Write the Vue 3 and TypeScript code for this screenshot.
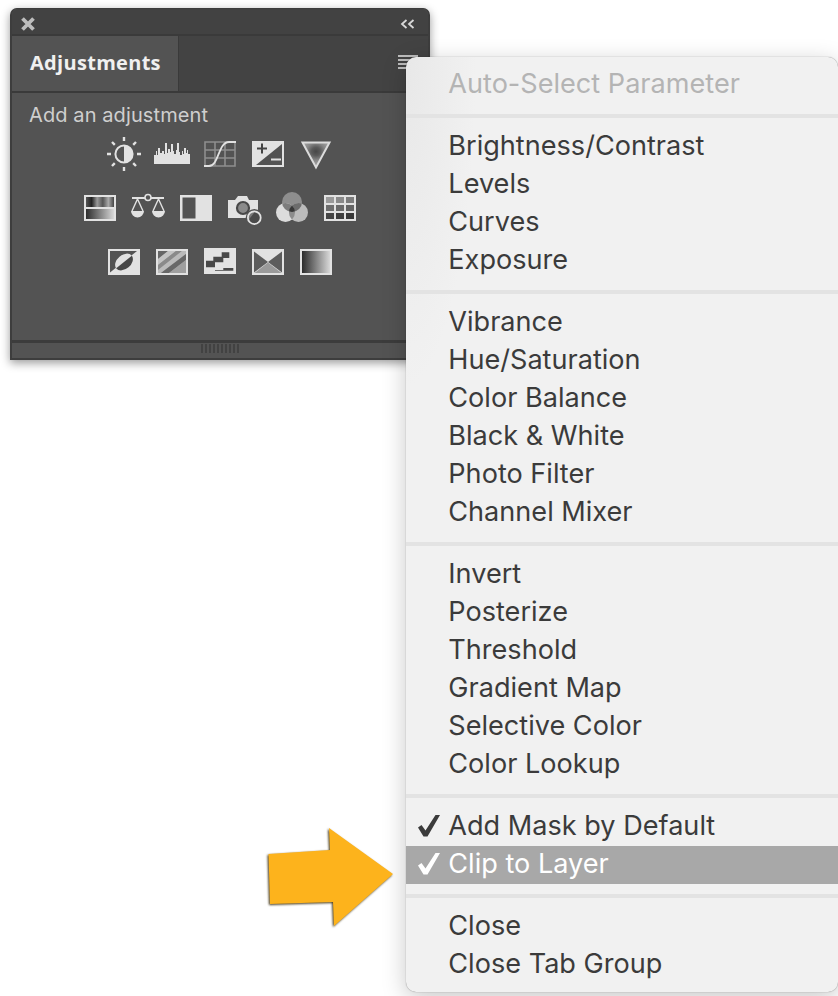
<template>
  <div class="page">
    <section class="panel">
      <header class="title-bar">
        <svg class="close-x" width="14" height="14" viewBox="0 0 14 14">
          <path d="M1.500 1.500l11 11M12.500 1.500l-11 11" stroke="#bdbdbd" stroke-width="3.800" />
        </svg>
        <svg class="collapse" width="16" height="12" viewBox="0 0 16 12">
          <path d="M6.500 2L2 6l4.500 4M13.500 2L9 6l4.500 4" fill="none" stroke="#d8d8d8" stroke-width="1.800" />
        </svg>
      </header>
      <div class="tab-row">
        <div class="tab">Adjustments</div>
        <div class="tab-menu"><i></i><i></i><i></i><i></i></div>
      </div>
      <div class="body">
        <p class="hint">Add an adjustment</p>
        <div class="icon-rows">
          <div class="icon-row">
            <!-- brightness -->
            <svg viewBox="0 0 40 40">
              <circle cx="20" cy="20" r="8.600" fill="#535353" stroke="#e2e2e2" stroke-width="2" />
              <path d="M20 11.400a8.600 8.600 0 0 1 0 17.200z" fill="#e2e2e2" />
              <path d="M20 3v4M20 33v4M3 20h4M33 20h4M8 8l2.800 2.800M32 8l-2.800 2.800M8 32l2.800-2.800M32 32l-2.800-2.800" stroke="#e2e2e2" stroke-width="2.400" />
            </svg>
            <!-- levels -->
            <svg viewBox="0 0 40 40">
              <path d="M2 30V21H4V17H5V21H6V14H8V19H10V17H12V20H13V9H15V19H16V15H18V18H19V10H21V17H22V20H24V16H25V9H27V18H28V21H30V17H31V20H32V14H34V19H35V16H36V20H38V30z" fill="#e2e2e2" />
            </svg>
            <!-- curves -->
            <svg viewBox="0 0 40 40">
              <path d="M5 8h30v24H5zM15 8v24M25 8v24M5 16h30M5 24h30" fill="none" stroke="#8e8e8e" stroke-width="1.600" />
              <path d="M4 32h5c10 0 9-24 20-24h7" fill="none" stroke="#e2e2e2" stroke-width="1.800" />
            </svg>
            <!-- exposure -->
            <svg viewBox="0 0 40 40">
              <rect x="4" y="7" width="32" height="26" fill="#e2e2e2" />
              <path d="M34 10v21H8z" fill="#535353" />
              <path d="M9 14.500h10M14 9.500v10" stroke="#444" stroke-width="2" />
              <path d="M23 25.500h10" stroke="#e2e2e2" stroke-width="2" />
            </svg>
            <!-- vibrance -->
            <svg viewBox="0 0 40 40">
              <defs>
                <radialGradient id="vib" cx="50%" cy="36%" r="48%">
                  <stop offset="0" stop-color="#474747" />
                  <stop offset=".35" stop-color="#5a5a5a" />
                  <stop offset=".7" stop-color="#858585" />
                  <stop offset="1" stop-color="#9a9a9a" />
                </radialGradient>
              </defs>
              <path d="M6.500 8.500h27L20 33.500z" fill="url(#vib)" stroke="#dcdcdc" stroke-width="2" />
            </svg>
          </div>
          <div class="icon-row">
            <!-- hue/saturation -->
            <svg viewBox="0 0 40 40">
              <defs>
                <linearGradient id="hueTop">
                  <stop offset="0" stop-color="#555" /><stop offset=".2" stop-color="#222" />
                  <stop offset=".4" stop-color="#999" /><stop offset=".6" stop-color="#555" />
                  <stop offset=".8" stop-color="#aaa" /><stop offset="1" stop-color="#444" />
                </linearGradient>
                <linearGradient id="grayBar">
                  <stop offset="0" stop-color="#2c2c2c" /><stop offset="1" stop-color="#d8d8d8" />
                </linearGradient>
              </defs>
              <rect x="4" y="7" width="32" height="26" fill="#e2e2e2" />
              <rect x="6" y="9" width="28" height="10" fill="url(#hueTop)" />
              <rect x="6" y="21" width="28" height="10" fill="url(#grayBar)" />
            </svg>
            <!-- color balance -->
            <svg viewBox="0 0 40 40">
              <path d="M4 10h13M23 10h13" stroke="#e2e2e2" stroke-width="1.800" />
              <circle cx="20" cy="9.500" r="3" fill="none" stroke="#e2e2e2" stroke-width="1.600" />
              <path d="M9.500 11L4 23M9.500 11l5.500 12M30.500 11L25 23M30.500 11L36 23" fill="none" stroke="#e2e2e2" stroke-width="1.400" />
              <path d="M3 23h13a6.500 6.500 0 0 1-13 0zM24 23h13a6.500 6.500 0 0 1-13 0z" fill="#e2e2e2" />
            </svg>
            <!-- black & white -->
            <svg viewBox="0 0 40 40">
              <rect x="4" y="7" width="32" height="26" fill="#e2e2e2" />
              <rect x="6.500" y="9.500" width="13" height="21" fill="#535353" />
            </svg>
            <!-- photo filter -->
            <svg viewBox="0 0 40 40">
              <path d="M4 12h7l3-4h9l2 4h9v18H4z" fill="#e2e2e2" />
              <circle cx="19" cy="20" r="6" fill="#8a8a8a" stroke="#484848" stroke-width="2.200" />
              <circle cx="30.300" cy="29.700" r="8.600" fill="#535353" />
              <circle cx="30.300" cy="29.700" r="6.400" fill="#7a7a7a" stroke="#e2e2e2" stroke-width="1.800" />
              <path d="M30.300 24.500a5.200 5.200 0 0 1 0 10.400a5.200 5.200 0 0 1-5-4z" fill="#4a4a4a" />
            </svg>
            <!-- channel mixer -->
            <svg viewBox="0 0 40 40">
              <defs>
                <clipPath id="mixTop"><circle cx="20" cy="14" r="10" /></clipPath>
                <clipPath id="mixLeft"><circle cx="13.500" cy="24.500" r="9.500" /></clipPath>
              </defs>
              <circle cx="20" cy="14" r="10" fill="#8e8e8e" />
              <circle cx="13.500" cy="24.500" r="9.500" fill="#dcdcdc" />
              <circle cx="26.500" cy="24.500" r="9.500" fill="#bcbcbc" />
              <circle cx="13.500" cy="24.500" r="9.500" fill="#7c7c7c" clip-path="url(#mixTop)" />
              <circle cx="26.500" cy="24.500" r="9.500" fill="#6c6c6c" clip-path="url(#mixTop)" />
              <circle cx="26.500" cy="24.500" r="9.500" fill="#8c8c8c" clip-path="url(#mixLeft)" />
              <g clip-path="url(#mixTop)">
                <circle cx="26.500" cy="24.500" r="9.500" fill="#383838" clip-path="url(#mixLeft)" />
              </g>
            </svg>
            <!-- color lookup -->
            <svg viewBox="0 0 40 40">
              <rect x="4" y="7" width="32" height="26" fill="#e2e2e2" />
              <rect x="6" y="9" width="8" height="6" fill="#9a9a9a" /><rect x="16" y="9" width="8" height="6" fill="#8a8a8a" /><rect x="26" y="9" width="8" height="6" fill="#7c7c7c" />
              <rect x="6" y="17" width="8" height="6" fill="#6e6e6e" /><rect x="16" y="17" width="8" height="6" fill="#6a6a6a" /><rect x="26" y="17" width="8" height="6" fill="#646464" />
              <rect x="6" y="25" width="8" height="6" fill="#454545" /><rect x="16" y="25" width="8" height="6" fill="#3e3e3e" /><rect x="26" y="25" width="8" height="6" fill="#383838" />
            </svg>
          </div>
          <div class="icon-row">
            <!-- invert -->
            <svg viewBox="0 0 40 40">
              <defs>
                <clipPath id="invUpper"><path d="M0 0H40V4L0 36z" /></clipPath>
              </defs>
              <rect x="4" y="7" width="32" height="26" fill="#e2e2e2" />
              <path d="M6 9h27L6 30.500z" fill="#535353" />
              <ellipse cx="20" cy="20" rx="10" ry="7" transform="rotate(-40 20 20)" fill="#484848" />
              <g clip-path="url(#invUpper)">
                <ellipse cx="20" cy="20" rx="10" ry="7" transform="rotate(-40 20 20)" fill="#e2e2e2" />
              </g>
            </svg>
            <!-- posterize -->
            <svg viewBox="0 0 40 40">
              <rect x="4" y="7" width="32" height="26" fill="#e2e2e2" />
              <rect x="6" y="9" width="28" height="22" fill="#9c9c9c" />
              <path d="M6 9h10L6 17z" fill="#666" />
              <path d="M6 17L16 9h8L6 23z" fill="#c4c4c4" />
              <path d="M6 23L24 9h6L6 28z" fill="#8a8a8a" />
              <path d="M6 28L30 9h4v3L9 31H6z" fill="#bbb" />
              <path d="M9 31L34 12v6L17 31z" fill="#686868" />
              <path d="M17 31L34 18v13z" fill="#a0a0a0" />
            </svg>
            <!-- threshold -->
            <svg viewBox="0 0 40 40">
              <rect x="4" y="6" width="32" height="26" fill="#e2e2e2" />
              <path d="M6 18.700h7.300v-4h8.400v-4.400h7.600V16h-6v4.300H15v5H6z" fill="#484848" />
              <path d="M15 28h8.300v-2h10v2.700H15z" fill="#484848" />
            </svg>
            <!-- gradient map -->
            <svg viewBox="0 0 40 40">
              <rect x="4" y="7" width="32" height="26" fill="#e2e2e2" />
              <path d="M6 9.500L20 20L6 30.500z" fill="#5c5c5c" />
              <path d="M34 9.500L20 20L34 30.500z" fill="#5c5c5c" />
              <path d="M6.500 31h27L20 20.500z" fill="#9a9a9a" />
            </svg>
            <!-- selective color -->
            <svg viewBox="0 0 40 40">
              <rect x="4" y="7" width="32" height="26" fill="#e2e2e2" />
              <rect x="6" y="9" width="28" height="22" fill="url(#grayBar)" />
            </svg>
          </div>
        </div>
      </div>
      <footer class="panel-foot"><span class="grip"></span></footer>
    </section>

    <nav class="menu">
      <template v-for="(group, i) in groups" :key="i">
        <div v-if="i > 0" class="sep"></div>
        <div
          v-for="item in group"
          :key="item.label"
          class="item"
          :class="{ off: item.disabled, active: item.active }"
        >
          <svg v-if="item.checked" class="check" viewBox="0 0 24 24">
            <path d="M1 13.500L4.500 11l4 5.500L18.500 1H23L10.500 22.500H6.500z" />
          </svg>{{ item.label }}
        </div>
      </template>
    </nav>

    <svg class="arrow" width="140" height="110" viewBox="0 0 140 110">
      <path d="M8.500 34L70 30 69 8 133 54 74 106 73 82 10 84z" fill="#fdb31c" />
    </svg>
  </div>
</template>

<script setup lang="ts">
interface MenuItem {
  label: string
  disabled?: boolean
  checked?: boolean
  active?: boolean
}

const names = (list: string[]): MenuItem[] => list.map((label) => ({ label }))

const groups: MenuItem[][] = [
  [{ label: 'Auto-Select Parameter', disabled: true }],
  names(['Brightness/Contrast', 'Levels', 'Curves', 'Exposure']),
  names(['Vibrance', 'Hue/Saturation', 'Color Balance', 'Black & White', 'Photo Filter', 'Channel Mixer']),
  names(['Invert', 'Posterize', 'Threshold', 'Gradient Map', 'Selective Color', 'Color Lookup']),
  [
    { label: 'Add Mask by Default', checked: true },
    { label: 'Clip to Layer', checked: true, active: true }
  ],
  names(['Close', 'Close Tab Group'])
]
</script>

<style>
html,
body {
  background: #fff;
  overflow: hidden;
}
</style>

<style scoped>
.page {
  position: relative;
  width: 838px;
  height: 996px;
  overflow: hidden;
  padding: 8px 0 0 10px;
  box-sizing: border-box;
  font-family: Inter, "Liberation Sans", sans-serif;
}

.panel {
  width: 420px;
  height: 352px;
  display: flex;
  flex-direction: column;
  box-sizing: border-box;
  background: #535353;
  border: 2px solid #3d3d3d;
  border-top-width: 1px;
  border-radius: 7px 7px 0 0;
  box-shadow: 0 3px 10px rgba(0, 0, 0, 0.4);
}

.title-bar {
  height: 25px;
  flex: none;
  box-sizing: border-box;
  display: flex;
  align-items: center;
  justify-content: space-between;
  padding: 5px 12px 0 9px;
  background: #424242;
  border-radius: 6px 6px 0 0;
}

.tab-row {
  height: 57px;
  flex: none;
  box-sizing: border-box;
  display: flex;
  background: #434343;
  border-top: 2px solid #3a3a3a;
}

.tab {
  width: 167px;
  padding-left: 18px;
  box-sizing: border-box;
  background: #535353;
  border-right: 1px solid #3a3a3a;
  color: #f0f0f0;
  font: 700 20px/53px "Open Sans", sans-serif;
  letter-spacing: 0.3px;
}

.tab-menu {
  margin: 19px 10px 0 auto;
  width: 20px;
}

.tab-menu i {
  display: block;
  height: 2px;
  margin-bottom: 2px;
  background: #bdbdbd;
}

.body {
  flex: 1;
  min-height: 0;
  border-top: 2px solid #3a3a3a;
}

.hint {
  margin: 0;
  padding: 10px 0 0 17px;
  font-size: 20px;
  line-height: 24px;
  letter-spacing: 0.1px;
  color: #cfcfcf;
}

.icon-rows {
  display: flex;
  flex-direction: column;
  gap: 14px;
  margin-top: 7px;
}

.icon-row {
  display: flex;
  justify-content: center;
  gap: 8px;
}

.icon-row svg {
  width: 40px;
  height: 40px;
  flex: none;
}

.panel-foot {
  height: 15px;
  flex: none;
  display: flex;
  justify-content: center;
  border-top: 3px solid #3c3c3c;
}

.grip {
  width: 38px;
  height: 9px;
  margin-top: 1px;
  background: repeating-linear-gradient(to right, #424242 0 2px, transparent 2px 4px);
}

.menu {
  position: absolute;
  left: 406px;
  top: 57px;
  width: 432px;
  height: 935px;
  box-sizing: border-box;
  padding-top: 7px;
  background: radial-gradient(ellipse 70px 330px at left top, #e8e8e8, #f1f1f1) no-repeat, #f1f1f1;
  border-radius: 10px;
  box-shadow: 0 0 1px rgba(0, 0, 0, 0.5), 0 6px 24px rgba(0, 0, 0, 0.22);
}

.item {
  position: relative;
  height: 38px;
  padding-left: 43px;
  font-size: 27.1px;
  line-height: 40px;
  color: #3b3b3b;
  white-space: nowrap;
  text-indent: -0.7px;
}

.item.off {
  color: #b4b4b4;
}

.item.active {
  color: #fff;
  z-index: 0;
}

.item.active::before {
  content: "";
  position: absolute;
  z-index: -1;
  left: 0;
  right: 0;
  top: 2px;
  bottom: -2px;
  background: #a8a8a8;
}

.check {
  position: absolute;
  left: 11px;
  top: 8px;
  width: 24px;
  height: 24px;
  fill: currentColor;
}

.sep {
  height: 4px;
  margin: 12px 0 8px;
  background: #e3e3e3;
}

.arrow {
  position: absolute;
  left: 260px;
  top: 820px;
  filter: drop-shadow(-1px 1px 1px rgba(50, 35, 0, 0.9));
}
</style>
